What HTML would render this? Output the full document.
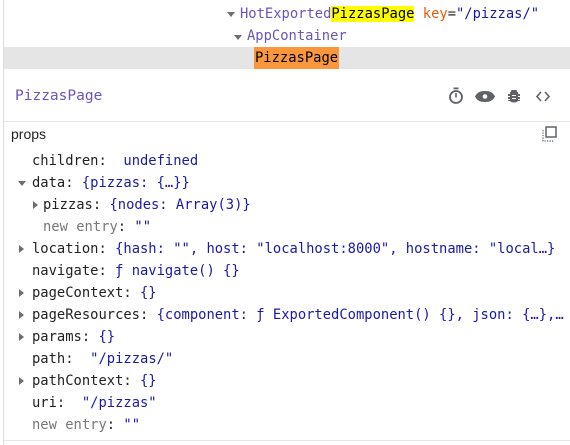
<!DOCTYPE html>
<html><head><style>
body{margin:0;width:570px;height:445px;overflow:hidden;background:#fff;position:relative;font-family:"DejaVu Sans Mono","Liberation Mono",monospace;font-size:13.8px}
.a{position:absolute;white-space:pre;line-height:22px}
.k{color:#222}.v{color:#1a1aa6}.g{color:#777}.p{color:#6b55b5}
.tri{position:absolute;width:0;height:0}
.down{border-left:4px solid transparent;border-right:4px solid transparent;border-top:5px solid #6e6e6e}
.right{border-top:4px solid transparent;border-bottom:4px solid transparent;border-left:5px solid #6e6e6e}
</style></head><body>
<div style="position:absolute;left:3px;top:0;width:1px;height:445px;background:#ddd"></div>
<div style="position:absolute;left:4px;top:47px;width:566px;height:22px;background:#e5e5e5"></div>
<div class="tri down" style="left:227px;top:12px"></div>
<div class="a" style="left:240px;top:3px"><span class="p">HotExported</span><span style="background:#ffff00;color:#000">PizzasPage</span> <span style="color:#e8590c">key</span><span class="k">=</span><span class="v">"/pizzas/"</span></div>
<div class="tri down" style="left:234px;top:35px"></div>
<div class="a p" style="left:247px;top:25px">AppContainer</div>
<div class="a" style="left:254px;top:47px;background:#fa963c;color:#000;padding:0 1px">PizzasPage</div>
<div class="a p" style="left:15px;top:85px;font-size:14.5px">PizzasPage</div>
<svg style="position:absolute;left:446px;top:86px" width="110" height="20" viewBox="0 0 110 20" fill="#5f6368">
<circle cx="10" cy="11" r="6" fill="none" stroke="#5f6368" stroke-width="1.8"/><rect x="7.5" y="1.5" width="5" height="1.8"/><rect x="9.2" y="7" width="1.6" height="4.5"/>
<path d="M29 10.5c2-4 5-5.5 10-5.5s8 1.5 10 5.5c-2 4-5 5.5-10 5.5s-8-1.5-10-5.5z"/><circle cx="39" cy="10.5" r="2.3" fill="#fff"/>
<path d="M64 6h8v2h2v2h-2v1h2v2h-2v1h2v1h-2c-1 2-7 2-8 0h-2v-1h2v-1h-2v-2h2v-1h-2V8h2z"/><rect x="65" y="4" width="6" height="2.5" rx="1"/><rect x="66" y="9" width="4" height="1" fill="#fff"/><rect x="66" y="12" width="4" height="1" fill="#fff"/>
<path d="M95 6l-4 4.5 4 4.5M99 6l4 4.5-4 4.5" fill="none" stroke="#5f6368" stroke-width="1.6"/>
</svg>
<div style="position:absolute;left:4px;top:121px;width:566px;height:1px;background:#e5e5e5"></div>
<div class="a" style="left:11px;top:123px;font-family:'Liberation Sans',sans-serif;font-size:14px;color:#222">props</div>
<svg style="position:absolute;left:542px;top:126px" width="16" height="16" viewBox="0 0 16 16"><rect x="4" y="1" width="10" height="10" fill="none" stroke="#5f6368" stroke-width="1.5"/><path d="M1 4v11h11" fill="none" stroke="#5f6368" stroke-width="1.2" stroke-dasharray="1.2 1.3"/></svg>

<div class="a" style="left:32px;top:150px"><span class="k">children:</span>  <span class="v">undefined</span></div>
<div class="tri down" style="left:18px;top:181px"></div>
<div class="a" style="left:32px;top:172px"><span class="k">data:</span> <span class="v">{pizzas: {…}}</span></div>
<div class="tri right" style="left:33px;top:201px"></div>
<div class="a" style="left:43px;top:194px"><span class="k">pizzas:</span> <span class="v">{nodes: Array(3)}</span></div>
<div class="a" style="left:43px;top:216px"><span class="g">new entry</span><span class="k">:</span> <span class="v">""</span></div>
<div class="tri right" style="left:19px;top:245px"></div>
<div class="a" style="left:32px;top:238px"><span class="k">location:</span> <span class="v">{hash: "", host: "localhost:8000", hostname: "local…}</span></div>
<div class="a" style="left:32px;top:260px"><span class="k">navigate:</span> <span class="v">ƒ navigate() {}</span></div>
<div class="tri right" style="left:19px;top:289px"></div>
<div class="a" style="left:32px;top:282px"><span class="k">pageContext:</span> <span class="v">{}</span></div>
<div class="tri right" style="left:19px;top:311px"></div>
<div class="a" style="left:32px;top:304px"><span class="k">pageResources:</span> <span class="v">{component: ƒ ExportedComponent() {}, json: {…},…</span></div>
<div class="tri right" style="left:19px;top:333px"></div>
<div class="a" style="left:32px;top:326px"><span class="k">params:</span> <span class="v">{}</span></div>
<div class="a" style="left:32px;top:348px"><span class="k">path:</span>  <span class="v">"/pizzas/"</span></div>
<div class="tri right" style="left:19px;top:377px"></div>
<div class="a" style="left:32px;top:370px"><span class="k">pathContext:</span> <span class="v">{}</span></div>
<div class="a" style="left:32px;top:392px"><span class="k">uri:</span>  <span class="v">"/pizzas"</span></div>
<div class="a" style="left:32px;top:414px"><span class="g">new entry</span><span class="k">:</span> <span class="v">""</span></div>
<div style="position:absolute;left:4px;top:440px;width:566px;height:1px;background:#e5e5e5"></div>
</body></html>
